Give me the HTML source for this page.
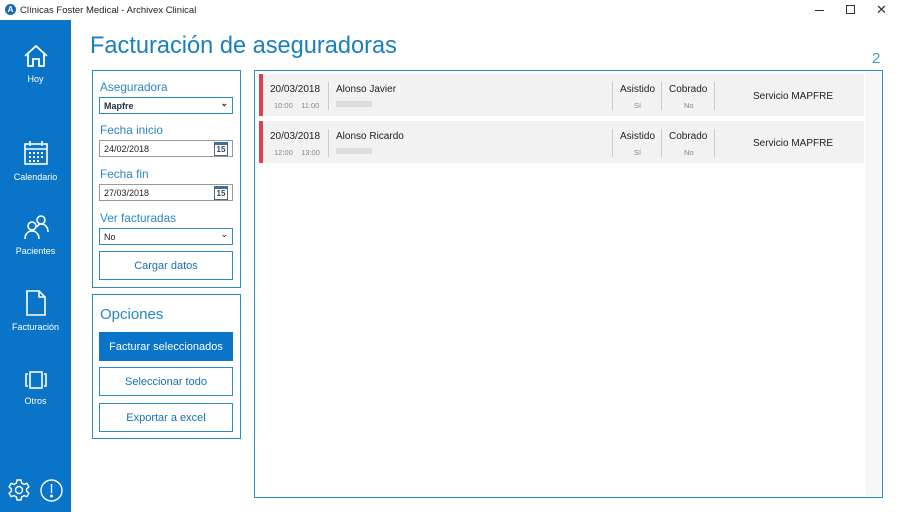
<!DOCTYPE html><html><head><meta charset="utf-8"><style>
*{box-sizing:border-box;margin:0;padding:0}
body{width:900px;height:512px;position:relative;background:#fff;font-family:"Liberation Sans",sans-serif;overflow:hidden;color:#222}
.a{position:absolute}
.side{left:0;top:20px;width:71px;height:492px;background:#0a74c8}
.nav{position:absolute;left:0;width:71px;text-align:center;color:#fff;font-size:9px}
.nav svg{display:block;margin:0 auto 6px}
.panel{border:1px solid #2b8ac8}
.lbl{color:#2a86c6;font-size:11.8px}
.inp{border:1px solid #999;height:17px;font-size:9px;padding:3px 4px;background:#fff}
.sel{border:1px solid #2b8ac8}
.btn{border:1px solid #2b8ac8;text-align:center;color:#1a6fb0;font-size:11px}
.row{left:259px;width:605px;height:42px;background:#f2f2f2;border-left:4px solid #d9434b}
.row div{position:absolute}
.sep{width:1px;background:#ccc;top:8px;height:28px}
.big{font-size:10px;color:#222}
.sm{font-size:7.5px;color:#888}
</style></head><body>
<div class="a" style="left:5px;top:4px;width:11px;height:11px;border-radius:50%;background:#1767b5;color:#fff;font-size:8px;font-weight:bold;text-align:center;line-height:11px">A</div>
<div class="a" style="left:20px;top:5px;font-size:9.5px;color:#222">Clínicas Foster Medical - Archivex Clinical</div>
<div class="a" style="left:815px;top:10px;width:9px;height:1px;background:#333"></div>
<div class="a" style="left:846px;top:5px;width:9px;height:9px;border:1px solid #333"></div>
<div class="a" style="left:876px;top:2px;font-size:13px;color:#333">✕</div>
<div class="a side">
<div class="nav" style="top:24px"><svg width="26" height="24" viewBox="0 0 26 24" fill="none" stroke="#fff" stroke-width="1.8"><path d="M2 12L13 2l11 10M5 10v12h5v-7h6v7h5V10"/></svg>Hoy</div>
<div class="nav" style="top:120px"><svg width="26" height="26" viewBox="0 0 26 26" fill="none" stroke="#fff" stroke-width="1.6"><rect x="2" y="4" width="22" height="20"/><path d="M2 9h22M7 1v5M19 1v5"/><g fill="#fff" stroke="none"><rect x="6" y="12" width="2" height="2"/><rect x="10" y="12" width="2" height="2"/><rect x="14" y="12" width="2" height="2"/><rect x="18" y="12" width="2" height="2"/><rect x="6" y="16" width="2" height="2"/><rect x="10" y="16" width="2" height="2"/><rect x="14" y="16" width="2" height="2"/><rect x="18" y="16" width="2" height="2"/><rect x="6" y="20" width="2" height="2"/><rect x="10" y="20" width="2" height="2"/><rect x="14" y="20" width="2" height="2"/></g></svg>Calendario</div>
<div class="nav" style="top:194px"><svg width="26" height="26" viewBox="0 0 26 26" fill="none" stroke="#fff" stroke-width="1.6"><circle cx="9" cy="12" r="4"/><path d="M2 25c0-5 3-8 7-8s7 3 7 8"/><circle cx="18" cy="6" r="4"/><path d="M14 13c1-2 2-3 4-3 4 0 7 3 7 8"/></svg>Pacientes</div>
<div class="nav" style="top:270px"><svg width="22" height="26" viewBox="0 0 22 26" fill="none" stroke="#fff" stroke-width="1.6"><path d="M2 1h12l6 6v18H2zM14 1v6h6"/></svg>Facturación</div>
<div class="nav" style="top:350px"><svg width="24" height="20" viewBox="0 0 24 20" fill="none" stroke="#fff" stroke-width="1.6"><rect x="6" y="2" width="12" height="16"/><path d="M4 4H2v12h2M20 4h2v12h-2"/></svg>Otros</div>
<svg class="a" style="left:8px;top:459px" width="22" height="22" viewBox="0 0 22 22" fill="none" stroke="#fff" stroke-width="1.4"><circle cx="11" cy="11" r="3.5"/><path d="M9 1h4l.6 3 2.4 1.4 2.9-1 2 3.4-2.3 2v2.4l2.3 2-2 3.4-2.9-1L13.6 18 13 21H9l-.6-3L6 16.6l-2.9 1-2-3.4 2.3-2V9.8L1.1 7.8l2-3.4 2.9 1L8.4 4z"/></svg>
<svg class="a" style="left:40px;top:459px" width="23" height="23" viewBox="0 0 23 23" fill="none" stroke="#fff" stroke-width="1.4"><circle cx="11.5" cy="11.5" r="10.5"/><path d="M11.5 5v9"/><circle cx="11.5" cy="17" r=".8" fill="#fff"/></svg>
</div>
<div class="a" style="left:90px;top:33px;font-size:23.6px;color:#1a7fc1">Facturación de aseguradoras</div>
<div class="a" style="left:872px;top:50px;font-size:15px;color:#4a9ad2">2</div>
<div class="a panel" style="left:92px;top:70px;width:149px;height:218px"></div>
<div class="a lbl" style="left:100px;top:80px">Aseguradora</div>
<div class="a inp sel" style="left:99px;top:97px;width:134px;font-weight:bold;color:#234">Mapfre<span style="position:absolute;right:4px;top:0">⌄</span></div>
<div class="a lbl" style="left:100px;top:123px">Fecha inicio</div>
<div class="a inp" style="left:99px;top:140px;width:134px">24/02/2018</div>
<div class="a" style="left:214px;top:142px;width:14px;height:14px;border:1px solid #567;border-top:3px solid #3a6fa0;font-size:8px;text-align:center;line-height:10px;font-weight:bold;color:#345">15</div>
<div class="a lbl" style="left:100px;top:167px">Fecha fin</div>
<div class="a inp" style="left:99px;top:184px;width:134px">27/03/2018</div>
<div class="a" style="left:214px;top:186px;width:14px;height:14px;border:1px solid #567;border-top:3px solid #3a6fa0;font-size:8px;text-align:center;line-height:10px;font-weight:bold;color:#345">15</div>
<div class="a lbl" style="left:100px;top:211px">Ver facturadas</div>
<div class="a inp sel" style="left:99px;top:228px;width:134px">No<span style="position:absolute;right:4px;top:0">⌄</span></div>
<div class="a btn" style="left:99px;top:251px;width:134px;height:29px;line-height:29px">Cargar datos</div>
<div class="a panel" style="left:92px;top:294px;width:149px;height:145px"></div>
<div class="a" style="left:100px;top:306px;font-size:15px;color:#2a86c6">Opciones</div>
<div class="a btn" style="left:99px;top:332px;width:134px;height:29px;line-height:30px;background:#0a74c8;color:#fff;border:none">Facturar seleccionados</div>
<div class="a btn" style="left:99px;top:367px;width:134px;height:29px;line-height:29px">Seleccionar todo</div>
<div class="a btn" style="left:99px;top:403px;width:134px;height:29px;line-height:29px">Exportar a excel</div>
<div class="a panel" style="left:254px;top:70px;width:629px;height:428px"></div>
<div class="a" style="left:866px;top:72px;width:15px;height:424px;background:#f7f7f7"></div>
<div class="a row" style="top:74px">
<div class="big" style="left:7px;top:10px">20/03/2018</div><div class="sm" style="left:11px;top:27px">10:00 &nbsp;&nbsp; 11:00</div>
<div class="sep" style="left:65px"></div>
<div class="big" style="left:73px;top:10px">Alonso Javier</div><div style="left:73px;top:27px;width:36px;height:6px;background:#ddd"></div>
<div class="sep" style="left:349px"></div>
<div class="big" style="left:357px;top:10px">Asistido</div><div class="sm" style="left:371px;top:27px">Sí</div>
<div class="sep" style="left:398px"></div>
<div class="big" style="left:406px;top:10px">Cobrado</div><div class="sm" style="left:421px;top:27px">No</div>
<div class="sep" style="left:451px"></div>
<div class="big" style="left:490px;top:17px">Servicio MAPFRE</div>
</div>
<div class="a row" style="top:121px">
<div class="big" style="left:7px;top:10px">20/03/2018</div><div class="sm" style="left:11px;top:27px">12:00 &nbsp;&nbsp; 13:00</div>
<div class="sep" style="left:65px"></div>
<div class="big" style="left:73px;top:10px">Alonso Ricardo</div><div style="left:73px;top:27px;width:36px;height:6px;background:#ddd"></div>
<div class="sep" style="left:349px"></div>
<div class="big" style="left:357px;top:10px">Asistido</div><div class="sm" style="left:371px;top:27px">Sí</div>
<div class="sep" style="left:398px"></div>
<div class="big" style="left:406px;top:10px">Cobrado</div><div class="sm" style="left:421px;top:27px">No</div>
<div class="sep" style="left:451px"></div>
<div class="big" style="left:490px;top:17px">Servicio MAPFRE</div>
</div>
</body></html>
